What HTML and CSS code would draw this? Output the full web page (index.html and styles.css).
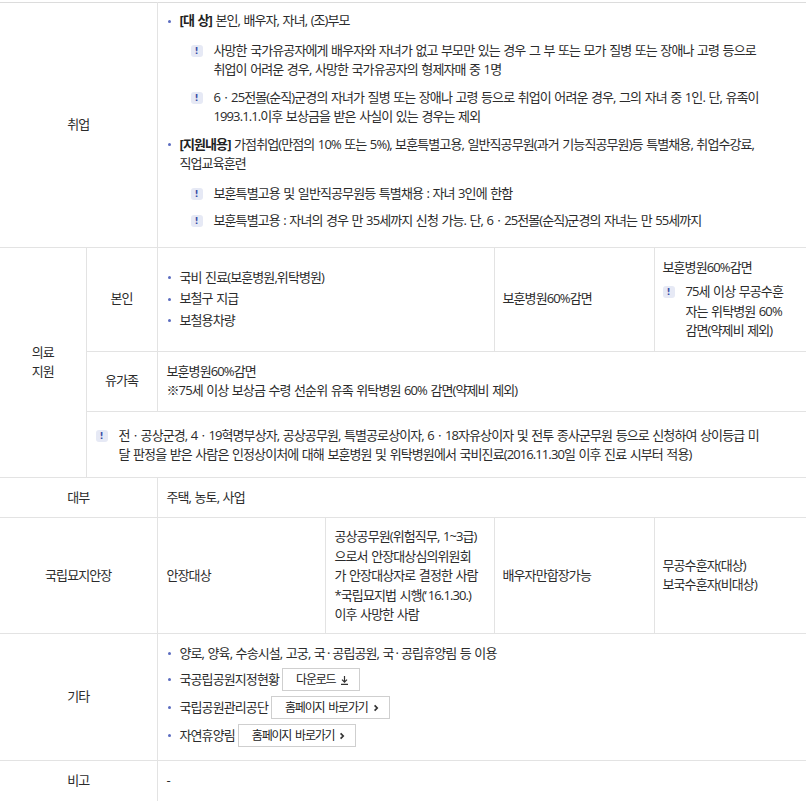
FILE: index.html
```html
<!DOCTYPE html>
<html lang="ko">
<head>
<meta charset="utf-8">
<title>지원 내용</title>
<link rel="stylesheet" href="styles.css">
</head>
<body>
<table class="benefit">
  <colgroup>
    <col class="c1"><col class="c2"><col class="c3"><col class="c4"><col class="c5"><col class="c6">
  </colgroup>
  <tbody>
    <tr>
      <th colspan="2">취업</th>
      <td colspan="4" class="job">
        <ul class="dot-list wide">
          <li><strong>[대 상]</strong> 본인, 배우자, 자녀, (조)부모
            <ul class="note-list">
              <li>사망한 국가유공자에게 배우자와 자녀가 없고 부모만 있는 경우 그 부 또는 모가 질병 또는 장애나 고령 등으로<br>취업이 어려운 경우, 사망한 국가유공자의 형제자매 중 1명</li>
              <li>6ㆍ25전몰(순직)군경의 자녀가 질병 또는 장애나 고령 등으로 취업이 어려운 경우, 그의 자녀 중 1인. 단, 유족이<br>1993.1.1.이후 보상금을 받은 사실이 있는 경우는 제외</li>
            </ul>
          </li>
          <li><strong>[지원내용]</strong> 가점취업(만점의 10% 또는 5%), 보훈특별고용, 일반직공무원(과거 기능직공무원)등 특별채용, 취업수강료,<br>직업교육훈련
            <ul class="note-list">
              <li>보훈특별고용 및 일반직공무원등 특별채용 : 자녀 3인에 한함</li>
              <li>보훈특별고용 : 자녀의 경우 만 35세까지 신청 가능. 단, 6ㆍ25전몰(순직)군경의 자녀는 만 55세까지</li>
            </ul>
          </li>
        </ul>
      </td>
    </tr>
    <tr>
      <th rowspan="3">의료<br>지원</th>
      <th>본인</th>
      <td colspan="2">
        <ul class="dot-list tight">
          <li>국비 진료(보훈병원,위탁병원)</li>
          <li>보철구 지급</li>
          <li>보철용차량</li>
        </ul>
      </td>
      <td class="narrow">보훈병원60%감면</td>
      <td class="narrow">
        <p class="plain">보훈병원60%감면</p>
        <ul class="note-list flush gap">
          <li>75세 이상 무공수훈<br>자는 위탁병원 60%<br>감면(약제비 제외)</li>
        </ul>
      </td>
    </tr>
    <tr>
      <th>유가족</th>
      <td colspan="4">보훈병원60%감면<br>※75세 이상 보상금 수령 선순위 유족 위탁병원 60% 감면(약제비 제외)</td>
    </tr>
    <tr>
      <td colspan="5" class="notice">
        <ul class="note-list flush">
          <li>전ㆍ공상군경, 4ㆍ19혁명부상자, 공상공무원, 특별공로상이자, 6ㆍ18자유상이자 및 전투 종사군무원 등으로 신청하여 상이등급 미<br>달 판정을 받은 사람은 인정상이처에 대해 보훈병원 및 위탁병원에서 국비진료(2016.11.30일 이후 진료 시부터 적용)</li>
        </ul>
      </td>
    </tr>
    <tr>
      <th colspan="2">대부</th>
      <td colspan="4">주택, 농토, 사업</td>
    </tr>
    <tr>
      <th colspan="2">국립묘지안장</th>
      <td>안장대상</td>
      <td class="cemetery">공상공무원(위험직무, 1~3급)<br>으로서 안장대상심의위원회<br>가 안장대상자로 결정한 사람<br>*국립묘지법 시행(<span class="quote">‘</span>16.1.30.)<br>이후 사망한 사람</td>
      <td class="narrow">배우자만합장가능</td>
      <td class="narrow">무공수훈자(대상)<br>보국수훈자(비대상)</td>
    </tr>
    <tr>
      <th colspan="2">기타</th>
      <td colspan="4" class="etc">
        <ul class="dot-list links">
          <li>양로, 양육, 수송시설, 고궁, 국<span class="mid">·</span>공립공원, 국<span class="mid">·</span>공립휴양림 등 이용</li>
          <li class="btn-item">국공립공원지정현황<a class="btn" href="#">다운로드 <svg class="ico" width="9" height="10" viewBox="0 0 9 10" aria-hidden="true"><path d="M4.5 1v6M2 4.6l2.5 2.6L7 4.6M1 9.4h7" fill="none" stroke="#333" stroke-width="1.2"/></svg></a></li>
          <li class="btn-item">국립공원관리공단<a class="btn" href="#">홈페이지 바로가기 <svg class="ico" width="6" height="8" viewBox="0 0 6 8" aria-hidden="true"><path d="M1.6 1.4 4.2 4 1.6 6.6" fill="none" stroke="#333" stroke-width="1.7"/></svg></a></li>
          <li class="btn-item">자연휴양림<a class="btn" href="#">홈페이지 바로가기 <svg class="ico" width="6" height="8" viewBox="0 0 6 8" aria-hidden="true"><path d="M1.6 1.4 4.2 4 1.6 6.6" fill="none" stroke="#333" stroke-width="1.7"/></svg></a></li>
        </ul>
      </td>
    </tr>
    <tr class="last">
      <th colspan="2">비고</th>
      <td colspan="4">-</td>
    </tr>
  </tbody>
</table>
</body>
</html>
```

FILE: styles.css
```css
* {
  box-sizing: border-box;
}

body {
  margin: 0;
  padding-top: 2px;
  background: #ffffff;
  color: #2b2b2b;
  font-family: "Open Sans", "Noto Sans CJK KR", sans-serif;
  font-size: 13px;
  letter-spacing: -0.9px;
  word-spacing: 1px;
}

.benefit {
  width: 806px;
  border-collapse: collapse;
  table-layout: fixed;
  border-left: hidden;
  border-right: hidden;
}

.c1 { width: 86px; }
.c2 { width: 71px; }
.c3 { width: 168px; }
.c4 { width: 169px; }
.c5 { width: 160px; }
.c6 { width: 152px; }

.benefit th,
.benefit td {
  border: 1px solid #e3e3e3;
  padding: 10px 9px;
  line-height: 19.5px;
  vertical-align: middle;
  text-align: left;
  font-weight: 400;
}

.benefit th {
  text-align: center;
}

.benefit tr:first-child > * {
  border-top-color: #dcdcdc;
}

.benefit tr.last > * {
  border-bottom: 1px solid #a9a9a9;
}

.benefit td.job {
  padding: 8px 9px 16px;
}

.benefit td.narrow {
  padding-left: 8px;
  padding-right: 8px;
}

.benefit td.notice {
  padding: 14px 9px 12px;
}

.benefit td.cemetery {
  padding: 9px 9px 8px;
}

.benefit td.etc {
  padding: 10px 9px 13px;
}

strong {
  font-weight: 700;
  color: #222222;
}

.quote {
  letter-spacing: 0;
  margin-right: 1px;
}

.mid {
  margin: 0 2px;
  letter-spacing: 0;
}

.plain {
  margin: 0;
}

/* dotted list */
.dot-list {
  list-style: none;
  margin: 0;
  padding: 0;
}

.dot-list > li {
  position: relative;
  padding-left: 13px;
}

.dot-list > li::before {
  content: "";
  position: absolute;
  left: 1px;
  top: 8.5px;
  width: 3px;
  height: 3px;
  border-radius: 50%;
  background: #5b6cc0;
}

.dot-list.wide > li + li {
  margin-top: 8px;
}

.dot-list.tight > li + li {
  margin-top: 2px;
}

.dot-list.links > li + li {
  margin-top: 5px;
}

.dot-list > li.btn-item {
  display: flex;
  align-items: center;
  gap: 3px;
  height: 23px;
}

.dot-list > li.btn-item::before {
  top: 10px;
}

/* notice list with ! badge */
.note-list {
  list-style: none;
  margin: 10px 0 0 11px;
  padding: 0;
}

.note-list.flush {
  margin: 0;
}

.note-list.flush.gap {
  margin-top: 5px;
}

.note-list > li {
  position: relative;
  padding-left: 23px;
}

.note-list > li + li {
  margin-top: 8px;
}

.note-list > li::before {
  content: "!";
  position: absolute;
  left: 0;
  top: 4px;
  width: 12px;
  height: 12px;
  border-radius: 3px;
  background: #e6e9f5;
  color: #3c4fa6;
  font-family: "DejaVu Sans", sans-serif;
  font-size: 9px;
  font-weight: 700;
  line-height: 12px;
  letter-spacing: 0;
  word-spacing: 0;
  text-align: center;
}

/* buttons */
.btn {
  display: inline-flex;
  align-items: center;
  gap: 5px;
  height: 23px;
  padding: 0 10px 0 13px;
  border: 1px solid #cfcfcf;
  background: #ffffff;
  color: #222222;
  font-size: 12px;
  letter-spacing: -1.2px;
  word-spacing: 2px;
  text-decoration: none;
}

.ico {
  display: block;
}
```
